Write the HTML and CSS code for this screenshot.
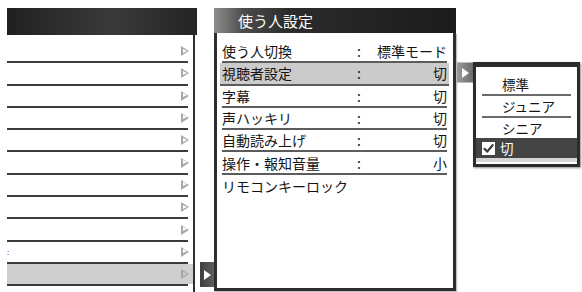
FILE: index.html
```html
<!DOCTYPE html>
<html lang="ja">
<head>
<meta charset="utf-8">
<link rel="stylesheet" href="styles.css">
</head>
<body>
<div class="screen">
  <section class="list-panel">
    <div class="list-head"></div>
    <div class="list-body">
      <div class="list-row"><span class="tri"></span></div>
      <div class="list-row"><span class="tri"></span></div>
      <div class="list-row"><span class="tri"></span></div>
      <div class="list-row"><span class="tri"></span></div>
      <div class="list-row"><span class="tri"></span></div>
      <div class="list-row"><span class="tri"></span></div>
      <div class="list-row"><span class="tri"></span></div>
      <div class="list-row"><span class="tri"></span></div>
      <div class="list-row"><span class="tri"></span></div>
      <div class="list-row"><span class="frag">:</span><span class="tri"></span></div>
      <div class="list-row is-selected"><span class="tri"></span></div>
    </div>
  </section>

  <div class="tab tab-left"><span class="tab-tri"></span></div>

  <section class="settings">
    <div class="settings-head">使う人設定</div>
    <div class="settings-body">
      <div class="set-row"><span class="set-label">使う人切換</span><span class="set-colon">:</span><span class="set-value">標準モード</span></div>
      <div class="set-row is-active"><span class="set-label">視聴者設定</span><span class="set-colon">:</span><span class="set-value">切</span></div>
      <div class="set-row"><span class="set-label">字幕</span><span class="set-colon">:</span><span class="set-value">切</span></div>
      <div class="set-row"><span class="set-label">声ハッキリ</span><span class="set-colon">:</span><span class="set-value">切</span></div>
      <div class="set-row"><span class="set-label">自動読み上げ</span><span class="set-colon">:</span><span class="set-value">切</span></div>
      <div class="set-row"><span class="set-label">操作・報知音量</span><span class="set-colon">:</span><span class="set-value">小</span></div>
      <div class="set-row no-line"><span class="set-label">リモコンキーロック</span></div>
    </div>
  </section>

  <div class="tab tab-right"><span class="tab-tri"></span></div>

  <div class="popup">
    <div class="pop-item">標準</div>
    <div class="pop-item">ジュニア</div>
    <div class="pop-item no-line">シニア</div>
    <div class="pop-item is-checked">
      <span class="check">
        <svg width="11" height="11" viewBox="0 0 11 11"><path d="M1.5 5.8 L4.2 8.6 L9.6 2.2" fill="none" stroke="#3a3a3a" stroke-width="2.2" stroke-linecap="round" stroke-linejoin="round"/></svg>
      </span>切
    </div>
  </div>
</div>
</body>
</html>
```
FILE: styles.css
```css
html, body {
  margin: 0;
  padding: 0;
  background: #fff;
}
body {
  width: 582px;
  height: 292px;
  overflow: hidden;
  font-family: "Noto Sans CJK JP", "Noto Sans", sans-serif;
  color: #141414;
}
.screen {
  display: flex;
  align-items: flex-start;
  padding: 8px 0 0 7px;
}

/* left list panel */
.list-panel {
  width: 190px;
  flex: none;
}
.list-head {
  height: 27px;
  background: linear-gradient(to right, #202020, #3a3a3a 55%, #242424);
}
.list-body {
  width: 186px;
  border-right: 2px solid #2e2e2e;
  padding-top: 6px;
  height: 260px;
}
.list-row {
  box-sizing: border-box;
  height: 22.3px;
  display: flex;
  align-items: center;
  justify-content: flex-end;
  padding-bottom: 2px;
  background: linear-gradient(#3c3c3c, #3c3c3c) no-repeat left bottom / 181px 2px;
}
.list-row.is-selected {
  background:
    linear-gradient(#3c3c3c, #3c3c3c) no-repeat left bottom / 181px 2px,
    linear-gradient(#cfcfcf, #cfcfcf) no-repeat left top / 100% 20.3px;
}
.frag {
  margin-right: auto;
  font-size: 8px;
  color: #555;
  line-height: 1;
}
.tri {
  width: 0;
  height: 0;
  margin-right: 4px;
  border-top: 5px solid transparent;
  border-bottom: 5px solid transparent;
  border-left: 8px solid #a8a8a8;
  position: relative;
}
.tri::after {
  content: "";
  position: absolute;
  left: -6.5px;
  top: -2.6px;
  border-top: 2.6px solid transparent;
  border-bottom: 2.6px solid transparent;
  border-left: 4.2px solid #fff;
}
.is-selected .tri::after {
  border-left-color: #cfcfcf;
}

/* tabs */
.tab {
  flex: none;
  display: flex;
  align-items: center;
  justify-content: center;
}
.tab-left {
  width: 14px;
  height: 25px;
  margin: 254px 0 0 3px;
  background: linear-gradient(to right, #3e3e3e, #5e5e5e);
}
.tab-right {
  width: 16px;
  height: 19px;
  margin-top: 54px;
  background: linear-gradient(to right, #9a9a9a, #6c6c6c);
  border: 1px solid #bdbdbd;
  border-right: none;
}
.tab-tri {
  width: 0;
  height: 0;
  border-top: 5px solid transparent;
  border-bottom: 5px solid transparent;
  border-left: 7px solid #fff;
}

/* settings panel */
.settings {
  width: 242px;
  flex: none;
}
.settings-head {
  height: 25px;
  line-height: 25px;
  padding-left: 24px;
  color: #fff;
  font-size: 15px;
  background: linear-gradient(to right, #8e8e8e 0, #4c4c4c 12%, #2c2c2c 30%, #1b1b1b 100%);
}
.settings-body {
  box-sizing: border-box;
  height: 258px;
  border: 3px solid #2e2e2e;
  border-top: none;
  padding: 8px 6px 0 5px;
  box-shadow: 1px 1px 1px rgba(0,0,0,0.25);
}
.set-row {
  box-sizing: border-box;
  height: 22.3px;
  display: flex;
  align-items: center;
  font-size: 14px;
  line-height: 20px;
  border-bottom: 2px solid #5c5c5c;
}
.set-row.no-line {
  border-bottom: none;
}
.set-row.is-active {
  background: #cbcbcb;
  margin: 0 -2px;
  padding: 0 2px;
}
.set-label {
  width: 135px;
  flex: none;
}
.set-colon {
  width: 10px;
  flex: none;
}
.set-value {
  flex: 1;
  text-align: right;
}

/* popup */
.popup {
  flex: none;
  box-sizing: border-box;
  width: 107px;
  height: 105px;
  margin-top: 54px;
  border: 3px solid #2c2c2c;
  border-top-width: 5px;
  background: #fff;
  padding: 7px 0 0;
  box-shadow: 1px 1px 2px rgba(0,0,0,0.45);
  font-size: 13.5px;
}
.pop-item {
  box-sizing: border-box;
  height: 22px;
  line-height: 20px;
  margin: 0 6px;
  padding-left: 20px;
  border-bottom: 2px solid #6a6a6a;
}
.pop-item:nth-child(2) {
  height: 22px;
}
.pop-item.no-line {
  border-bottom: none;
  height: 20px;
}
.pop-item.is-checked {
  margin: 0;
  height: 20px;
  border-bottom: 4px solid #d6d6d6;
  box-sizing: content-box;
  background: #444;
  color: #fff;
  display: flex;
  align-items: center;
  padding-left: 6px;
}
.check {
  width: 13px;
  height: 13px;
  background: #fff;
  display: inline-flex;
  align-items: center;
  justify-content: center;
  margin-right: 5px;
}
```
